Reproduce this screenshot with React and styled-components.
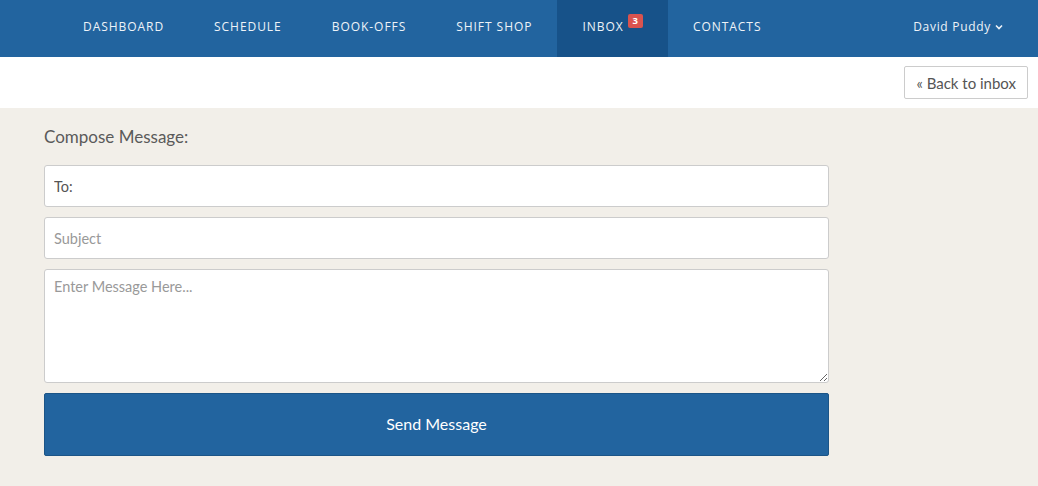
import styled, { createGlobalStyle } from "styled-components";

const GlobalStyle = createGlobalStyle`
  html, body {
    margin: 0;
    padding: 0;
    background: #f2efe9;
    font-family: "Lato", "Open Sans", sans-serif;
  }
  * { box-sizing: border-box; }
`;

const NavBar = styled.nav`
  display: flex;
  align-items: stretch;
  height: 57px;
  background: #22649f;
  padding-left: 58px;
  padding-right: 35px;
`;

const NavItem = styled.a`
  display: flex;
  align-items: center;
  padding: 0 25px 4px;
  color: #eef3f8;
  font-family: "Open Sans", "DejaVu Sans", sans-serif;
  font-size: 12px;
  font-weight: 500;
  letter-spacing: 0.95px;
  text-transform: uppercase;
  background: ${(p) => (p.$active ? "#175289" : "transparent")};
  cursor: pointer;
`;

const Badge = styled.span`
  display: inline-block;
  margin-left: 4px;
  margin-top: -12px;
  padding: 0 5px;
  background: #d9534f;
  color: #fff;
  border-radius: 2px;
  font-size: 9.5px;
  font-weight: 700;
  line-height: 14px;
  letter-spacing: 0;
`;

const UserMenu = styled.div`
  margin-left: auto;
  display: flex;
  align-items: center;
  gap: 4px;
  padding-bottom: 4px;
  color: #eef3f8;
  font-family: "Open Sans", "DejaVu Sans", sans-serif;
  font-size: 12px;
  font-weight: 500;
  letter-spacing: 0.7px;
`;

const SubBar = styled.div`
  display: flex;
  justify-content: flex-end;
  align-items: center;
  height: 51px;
  padding-right: 10px;
  background: #fff;
`;

const BackButton = styled.button`
  height: 33px;
  padding: 0 11px;
  background: #fff;
  border: 1px solid #ccc;
  border-radius: 2px;
  color: #555;
  font-family: "Lato", sans-serif;
  font-size: 15px;
  font-weight: 400;
`;

const Content = styled.main`
  display: flex;
  flex-direction: column;
  gap: 10px;
  width: 785px;
  margin-left: 44px;
  padding-top: 18px;
`;

const Heading = styled.h2`
  margin: 0 0 8px;
  font-size: 17px;
  font-weight: 400;
  color: #5a5a5a;
`;

const Field = styled.input`
  height: 42px;
  padding: 0 9px;
  border: 1px solid #ccc;
  border-radius: 3px;
  background: #fff;
  font-family: "Lato", sans-serif;
  font-size: 14.5px;
  font-weight: 400;
  color: #555;
  &::placeholder { color: #999; }
`;

const MessageArea = styled.textarea`
  height: 114px;
  padding: 8px 9px;
  border: 1px solid #ccc;
  border-radius: 3px;
  background: #fff;
  font-family: "Lato", sans-serif;
  font-size: 14.5px;
  font-weight: 400;
  color: #555;
  resize: vertical;
  &::placeholder { color: #999; }
`;

const SendButton = styled.button`
  height: 63px;
  padding-bottom: 3px;
  border: 1px solid #1c5587;
  border-radius: 2px;
  background: #22649f;
  color: #fff;
  font-family: "Lato", sans-serif;
  font-size: 16px;
`;

const Chevron = () => (
  <svg width="8" height="6" viewBox="0 0 8 6">
    <path d="M1 1.5 L4 4.5 L7 1.5" fill="none" stroke="#eef3f8" strokeWidth="1.6" />
  </svg>
);

const links = ["Dashboard", "Schedule", "Book-offs", "Shift Shop", "Inbox", "Contacts"];

export default function App() {
  return (
    <>
      <GlobalStyle />
      <NavBar>
        {links.map((l) => (
          <NavItem key={l} $active={l === "Inbox"}>
            {l}
            {l === "Inbox" && <Badge>3</Badge>}
          </NavItem>
        ))}
        <UserMenu>
          David Puddy <Chevron />
        </UserMenu>
      </NavBar>
      <SubBar>
        <BackButton>« Back to inbox</BackButton>
      </SubBar>
      <Content>
        <Heading>Compose Message:</Heading>
        <Field defaultValue="To:" />
        <Field placeholder="Subject" />
        <MessageArea placeholder="Enter Message Here..." />
        <SendButton>Send Message</SendButton>
      </Content>
    </>
  );
}
